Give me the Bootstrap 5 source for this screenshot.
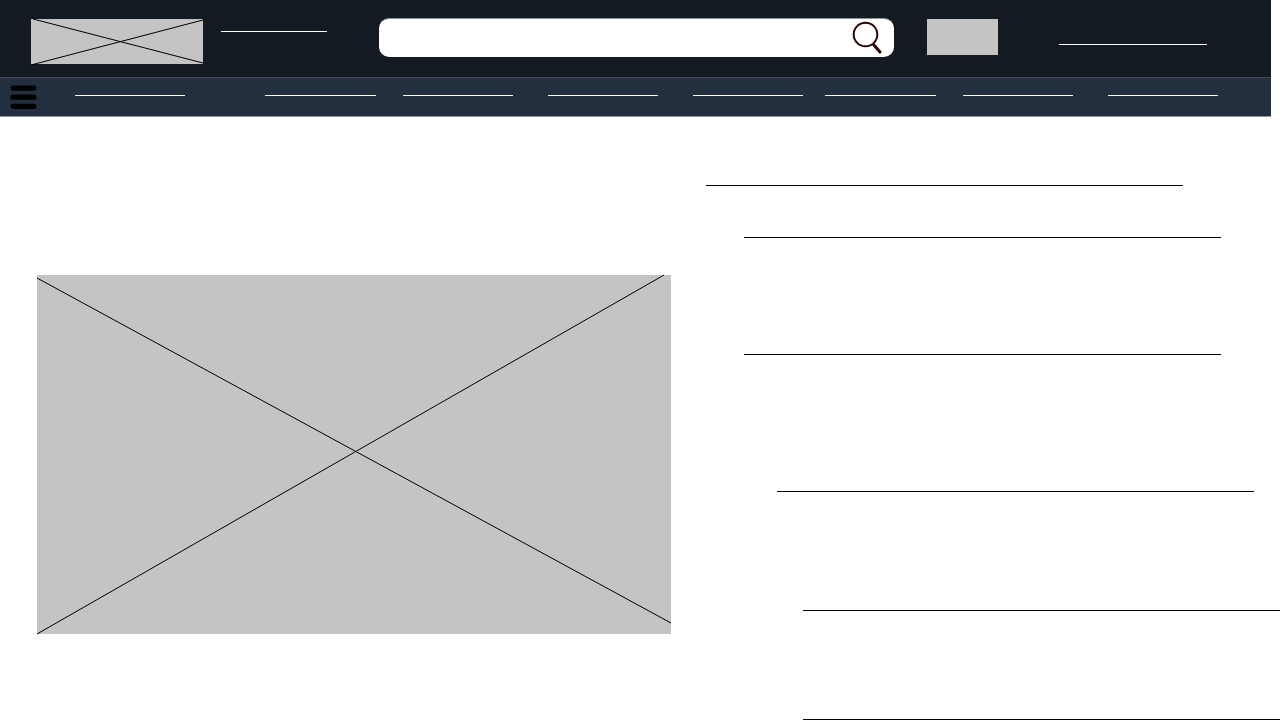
<!DOCTYPE html>
<html lang="en">
<head>
<meta charset="utf-8">
<meta name="viewport" content="width=device-width, initial-scale=1">
<title>Product page wireframe</title>
<link href="https://cdn.jsdelivr.net/npm/bootstrap@5.3.0/dist/css/bootstrap.min.css" rel="stylesheet">
<style>
  body { font-family: "Liberation Sans", sans-serif; background: #fff; }
  .site-head { margin-right: 9px; }
  .top-bar { background: #131a21; height: 77px; padding: 18px 64px 0 31px; }
  .logo-box { width: 172px; height: 45px; margin: 1px 18px 0 0; background: #c4c4c4; }
  .rule-line { display: block; height: 1px; background: #fff; }
  .place-line { width: 106px; margin: 13px 52px 0 0; }
  .search-box { background: #fff; border: 1px solid #8d9296; border-width: 1px 0 0; border-radius: 10px; height: 39px; padding-right: 12px; }
  .search-box input { box-shadow: none !important; }
  .search-box svg { display: block; }
  .flag-box { width: 71px; height: 36px; margin: 1px 61px 0 33px; background: #c4c4c4; }
  .account-line { width: 148px; margin-top: 26px; }
  .menu-bar { background: #232f3f; height: 40px; border-top: 1px solid #444c55; border-bottom: 1px solid #8b949f; padding: 0 53px 0 10px; }
  .menu-btn { width: 27px; height: 25px; margin: 7px 38px 0 0; }
  .menu-links { padding-top: 17px; }
  .menu-links a { flex: 1 1 0; }
  .gap-xl { margin-right: 80px; }
  .gap-l { margin-right: 35px; }
  .gap-m { margin-right: 27px; }
  .gap-s { margin-right: 22px; }
  .page-body { padding-left: 37px; }
  .photo-box { flex: 634 1 0; aspect-ratio: 634 / 359; margin: 158px 35px 0 0; background: #c4c4c4; }
  .detail-col { flex: 574 1 0; padding-top: 68px; }
  .detail-line { height: 1px; width: calc(100% - 97px); background: #000; }
  .in-1 { margin-left: 38px; }
  .in-2 { margin-left: 71px; }
  .in-3 { margin-left: 97px; }
  .down-1 { margin-top: 51px; }
  .down-2 { margin-top: 116px; }
  .down-3 { margin-top: 136px; }
  .down-4 { margin-top: 118px; }
  .down-5 { margin-top: 108px; }
</style>
</head>
<body>
<header class="site-head">
  <div class="top-bar d-flex align-items-start">
    <a href="#" class="logo-box flex-shrink-0" aria-label="Home">
      <svg class="d-block w-100 h-100 overflow-visible" viewBox="0 0 172 45" preserveAspectRatio="none" stroke="#000" aria-hidden="true"><path d="M2 0L172 44M0 46L172 1"/></svg>
    </a>
    <a href="#" class="rule-line place-line flex-shrink-0" aria-label="Location"></a>
    <form class="search-box d-flex flex-grow-1" role="search">
      <input type="search" class="form-control border-0 bg-transparent h-100" aria-label="Search">
      <button type="button" class="btn border-0 p-0 flex-shrink-0" aria-label="Submit search">
        <svg width="31" height="38" viewBox="0 0 31 38" fill="none" stroke="#2b0000" aria-hidden="true"><circle cx="14.500" cy="15.500" r="11.800" stroke-width="2"/><path d="M22.500 25.500L29 33" stroke-width="3" stroke-linecap="round"/></svg>
      </button>
    </form>
    <div class="flag-box flex-shrink-0"></div>
    <a href="#" class="rule-line account-line flex-shrink-0" aria-label="Account"></a>
  </div>
  <nav class="menu-bar d-flex align-items-start" aria-label="Main">
    <button type="button" class="menu-btn btn border-0 p-0 flex-shrink-0" aria-label="Menu">
      <svg class="d-block" width="27" height="25" viewBox="0 0 27 25" aria-hidden="true"><g fill="#000"><rect x=".5" y=".5" width="26" height="5.200" rx="2.600"/><rect x=".5" y="9.600" width="26" height="5.200" rx="2.600"/><rect x=".5" y="18.700" width="26" height="5.200" rx="2.600"/></g></svg>
    </button>
    <div class="menu-links d-flex flex-grow-1">
      <a href="#" class="rule-line gap-xl" aria-label="Menu link 1"></a>
      <a href="#" class="rule-line gap-m" aria-label="Menu link 2"></a>
      <a href="#" class="rule-line gap-l" aria-label="Menu link 3"></a>
      <a href="#" class="rule-line gap-l" aria-label="Menu link 4"></a>
      <a href="#" class="rule-line gap-s" aria-label="Menu link 5"></a>
      <a href="#" class="rule-line gap-m" aria-label="Menu link 6"></a>
      <a href="#" class="rule-line gap-l" aria-label="Menu link 7"></a>
      <a href="#" class="rule-line" aria-label="Menu link 8"></a>
    </div>
  </nav>
</header>
<main class="page-body d-flex align-items-start">
  <div class="photo-box">
    <svg class="d-block w-100 h-100 overflow-visible" viewBox="0 0 634 359" preserveAspectRatio="none" stroke="#000" aria-hidden="true"><path d="M0 3L634 348M0 359L627 0"/></svg>
  </div>
  <div class="detail-col">
    <div class="detail-line"></div>
    <div class="detail-line in-1 down-1"></div>
    <div class="detail-line in-1 down-2"></div>
    <div class="detail-line in-2 down-3"></div>
    <div class="detail-line in-3 down-4"></div>
    <div class="detail-line in-3 down-5"></div>
  </div>
</main>
<script src="https://cdn.jsdelivr.net/npm/bootstrap@5.3.0/dist/js/bootstrap.bundle.min.js"></script>
</body>
</html>
